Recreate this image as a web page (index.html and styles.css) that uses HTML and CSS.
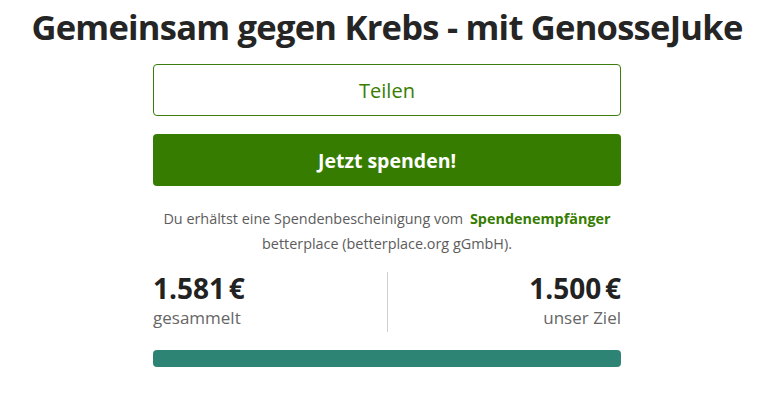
FILE: index.html
```html
<!DOCTYPE html>
<html lang="de">
<head>
<meta charset="utf-8">
<link rel="stylesheet" href="styles.css">
</head>
<body>
<main class="page">
  <h1 class="title">Gemeinsam gegen Krebs - mit GenosseJuke</h1>
  <div class="panel">
    <button class="btn btn-outline">Teilen</button>
    <button class="btn btn-primary">Jetzt spenden!</button>
    <p class="note">Du erhältst eine Spendenbescheinigung vom <a class="note-link">Spendenempfänger</a><br>betterplace (betterplace.org gGmbH).</p>
    <div class="stats">
      <div class="stat stat-left">
        <div class="amount">1.581&#8239;€</div>
        <div class="label">gesammelt</div>
      </div>
      <div class="divider"></div>
      <div class="stat stat-right">
        <div class="amount">1.500&#8239;€</div>
        <div class="label">unser Ziel</div>
      </div>
    </div>
    <div class="progress"><div class="progress-fill" style="width:100%"></div></div>
  </div>
</main>
</body>
</html>
```
FILE: styles.css
```css
* { box-sizing: border-box; }
html, body { margin: 0; padding: 0; background: #fff; }
body { font-family: "Open Sans", "Noto Sans", sans-serif; color: #252525; }
.page { display: flex; flex-direction: column; align-items: center; }
.title {
  margin: 0;
  padding-top: 4px;
  font-size: 34.5px;
  line-height: 46px;
  font-weight: 700;
  letter-spacing: -0.75px;
  color: #252525;
  text-align: center;
}
.panel {
  width: 468px;
  margin-top: 14px;
  display: flex;
  flex-direction: column;
}
.btn {
  display: block;
  width: 100%;
  height: 52px;
  border-radius: 4px;
  font-family: inherit;
  font-size: 20px;
  cursor: pointer;
}
.btn-outline {
  background: #fff;
  border: 1px solid #3a7d0c;
  color: #3a7d00;
  font-weight: 400;
}
.btn-primary {
  margin-top: 18px;
  background: #367c00;
  border: none;
  color: #fff;
  font-weight: 700;
  font-size: 19.5px;
}
.note {
  margin: 20px 0 0;
  font-size: 14.4px;
  line-height: 25px;
  color: #5c5c5c;
  text-align: center;
}
.note-link { color: #367c00; font-weight: 700; margin-left: 3px; }
.stats {
  margin-top: 16px;
  display: grid;
  grid-template-columns: 1fr 1px 1fr;
  height: 60px;
}
.stat { display: flex; flex-direction: column; }
.stat-right { align-items: flex-end; }
.divider { background: #d0d0d0; }
.amount { font-size: 28px; font-weight: 700; line-height: 32px; color: #222; letter-spacing: -0.6px; }
.label { font-size: 17px; line-height: 28px; color: #666; }
.progress {
  margin-top: 18px;
  height: 17px;
  border-radius: 4px;
  background: #e5e5e5;
  overflow: hidden;
}
.progress-fill { height: 100%; background: #2d8474; }
```
